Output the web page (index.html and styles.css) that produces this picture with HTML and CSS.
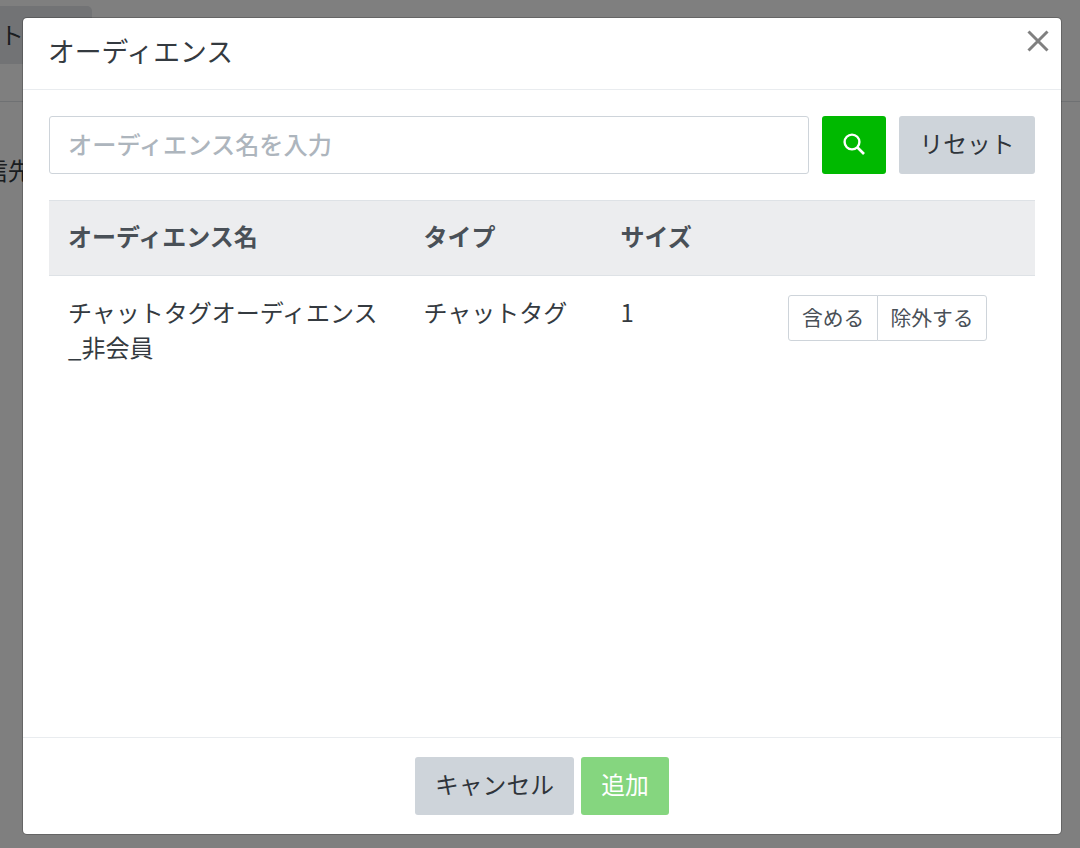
FILE: index.html
```html
<!DOCTYPE html>
<html lang="ja">
<head>
<meta charset="utf-8">
<title>オーディエンス</title>
<link rel="stylesheet" href="styles.css">
</head>
<body>
<div class="page">
  <div class="page-top"><span class="page-btn">ト</span></div>
  <div class="page-body">信先</div>
</div>
<div class="backdrop"></div>
<div class="modal">
  <header class="modal-header">
    <h2 class="modal-title">オーディエンス</h2>
    <button class="close" aria-label="閉じる">
      <svg width="22" height="22" viewBox="0 0 22 22"><path d="M1.5 1.5 20.5 20.5M20.5 1.5 1.5 20.5" fill="none" stroke="#808080" stroke-width="3"/></svg>
    </button>
  </header>
  <main class="modal-body">
    <form class="search">
      <input class="search-input" type="text" placeholder="オーディエンス名を入力">
      <button class="btn btn-green btn-icon" type="button" aria-label="検索">
        <svg width="22" height="22" viewBox="0 0 22 22"><circle cx="9" cy="9" r="7.4" fill="none" stroke="#fff" stroke-width="2.4"/><path d="M14 14 21 21" fill="none" stroke="#fff" stroke-width="2.6"/></svg>
      </button>
      <button class="btn btn-gray btn-reset" type="button">リセット</button>
    </form>
    <table class="table">
      <colgroup><col class="c1"><col class="c2"><col class="c3"><col></colgroup>
      <thead>
        <tr><th>オーディエンス名</th><th>タイプ</th><th>サイズ</th><th></th></tr>
      </thead>
      <tbody>
        <tr>
          <td>チャットタグオーディエンス_非会員</td>
          <td>チャットタグ</td>
          <td>1</td>
          <td class="actions">
            <div class="btn-group">
              <button type="button" class="seg">含める</button><button type="button" class="seg">除外する</button>
            </div>
          </td>
        </tr>
      </tbody>
    </table>
  </main>
  <footer class="modal-footer">
    <button class="btn btn-gray btn-cancel" type="button">キャンセル</button>
    <button class="btn btn-green-dis btn-add" type="button">追加</button>
  </footer>
</div>
</body>
</html>
```
FILE: styles.css
```css
* { box-sizing: border-box; }
html, body { margin: 0; height: 100%; }
body {
  width: 1080px;
  height: 848px;
  overflow: hidden;
  position: relative;
  background: #fff;
  color: #343a40;
  font-family: "Noto Sans CJK JP", "Noto Sans", sans-serif;
  font-size: 23.8px;
}
button { font-family: inherit; }
.page-top {
  height: 102px;
  border-bottom: 1px solid #dee2e6;
  padding-top: 6px;
}
.page-btn {
  display: flex;
  align-items: center;
  width: 92px;
  height: 58px;
  padding-bottom: 4px;
  border-radius: 0 5px 5px 0;
  background: #e4e6ea;
}
.page-body {
  padding-top: 53px;
  margin-left: -16px;
  line-height: 30px;
}
.backdrop {
  position: absolute;
  inset: 0;
  background: rgba(0, 0, 0, .5);
}
.modal {
  position: absolute;
  left: 22px;
  top: 17px;
  width: 1040px;
  height: 818px;
  display: flex;
  flex-direction: column;
  background: #fff;
  border: 1px solid rgba(0, 0, 0, .2);
  border-radius: 5px;
  background-clip: padding-box;
}
.modal-header {
  flex: none;
  height: 72px;
  padding: 0 26px 4px 25px;
  display: flex;
  align-items: center;
  border-bottom: 1px solid #e9ecef;
  position: relative;
}
.modal-title {
  margin: 0;
  font-size: 26.8px;
  font-weight: 400;
  line-height: 1.2;
  color: #343a40;
}
.close {
  position: absolute;
  right: 12px;
  top: 12px;
  padding: 0;
  border: 0;
  width: 22px;
  height: 22px;
  background: none;
  line-height: 0;
}
.modal-body {
  flex: 1;
  padding: 26px 26px 0;
}
.search {
  display: flex;
  height: 58px;
  margin-bottom: 26px;
}
.search-input {
  flex: 1;
  min-width: 0;
  height: 58px;
  padding: 0 18px 4px;
  border: 1px solid #ced4da;
  border-radius: 3px;
  font-family: inherit;
  font-size: 24.2px;
  color: #343a40;
  outline: none;
}
.search-input::placeholder {
  color: #adb5bd;
  opacity: 1;
  font-weight: 500;
}
.btn {
  display: flex;
  align-items: center;
  justify-content: center;
  flex: none;
  height: 58px;
  padding: 0 0 5px;
  border: 0;
  border-radius: 3px;
  font-size: 23.8px;
  color: #2f343a;
}
.btn-gray { background: #ced4da; }
.btn-green { background: #00b900; }
.btn-green-dis { background: #85d67f; color: #fff; }
.btn-icon { width: 64px; margin-left: 13px; padding: 0 0 2px; }
.btn-reset { width: 136px; margin-left: 13px; }
.table {
  width: 100%;
  border-collapse: collapse;
  table-layout: fixed;
}
.c1 { width: 355.5px; }
.c2 { width: 197px; }
.c3 { width: 167.5px; }
.table th {
  height: 75px;
  padding: 0 19px 6px;
  background: #ecedef;
  border-top: 1px solid #dee2e6;
  border-bottom: 1px solid #dee2e6;
  text-align: left;
  font-weight: 700;
  font-size: 24px;
  color: #495057;
}
.table td {
  padding: 18px 19px;
  vertical-align: top;
  line-height: 35px;
  font-size: 24px;
  color: #343a40;
}
.table td.actions { padding: 19px 0 19px 19px; }
.btn-group { display: flex; }
.seg {
  height: 46px;
  padding: 0 13px 2px;
  background: #fff;
  border: 1px solid #ced4da;
  font-size: 20.8px;
  color: #495057;
  white-space: nowrap;
}
.seg:first-child { border-radius: 3px 0 0 3px; }
.seg:last-child { border-radius: 0 3px 3px 0; margin-left: -1px; padding: 0 12px 2px; }
.modal-footer {
  flex: none;
  height: 97px;
  display: flex;
  justify-content: center;
  gap: 7px;
  padding-top: 19px;
  border-top: 1px solid #e9ecef;
}
.btn-cancel { width: 159px; }
.btn-add { width: 88px; }
```
